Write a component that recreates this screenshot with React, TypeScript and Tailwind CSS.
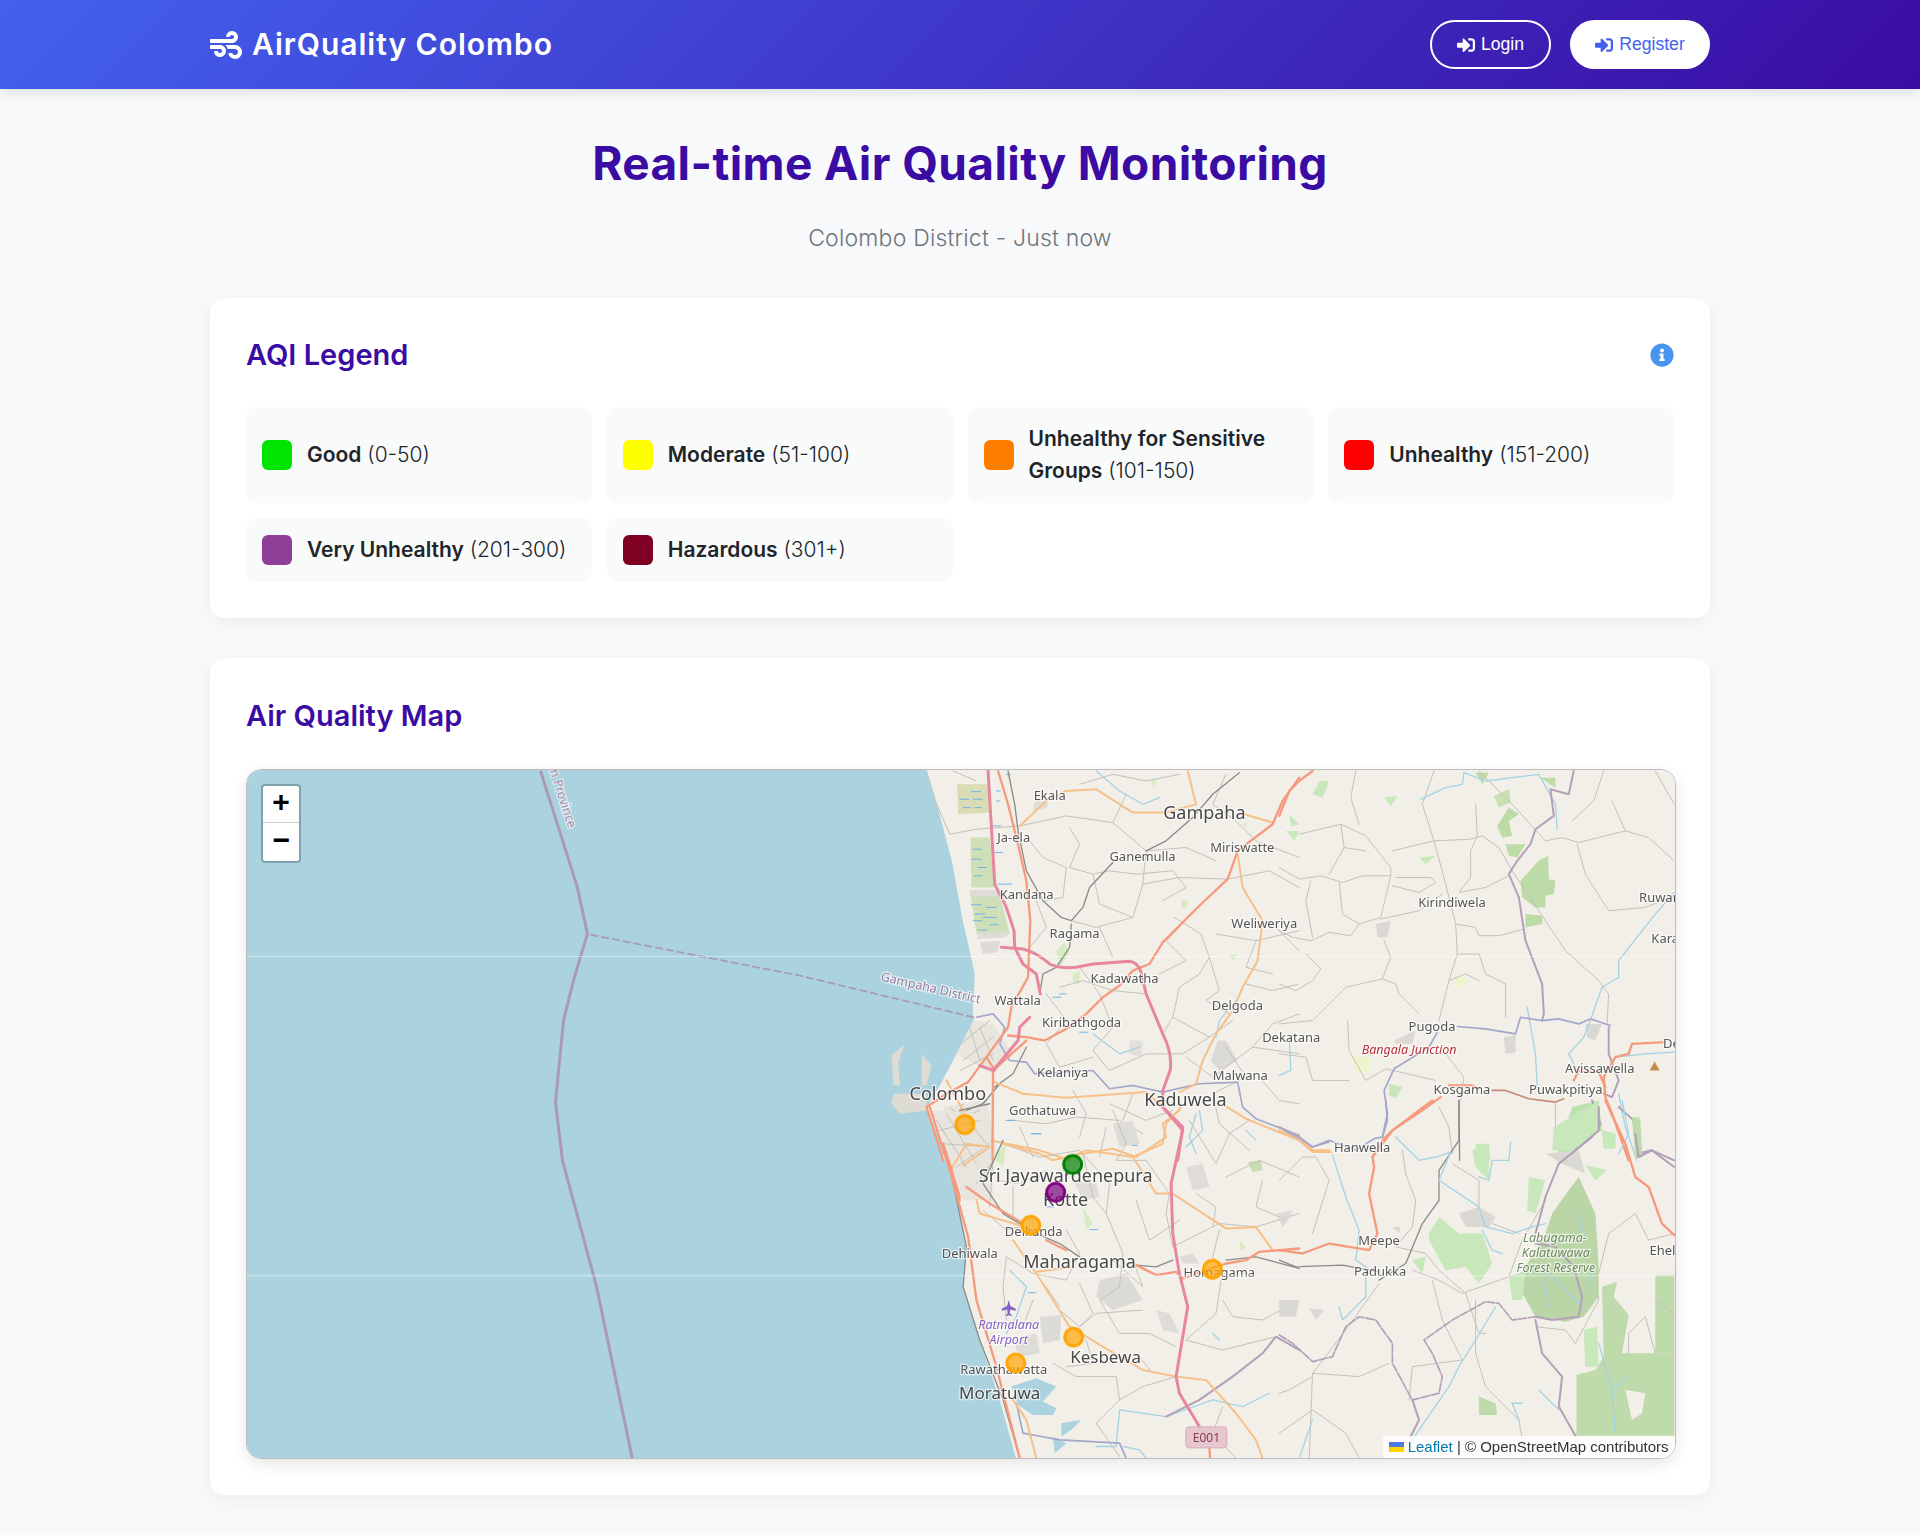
import { FaInfoCircle, FaSignInAlt, FaWind } from 'react-icons/fa';

const legend = [
  { name: 'Good', range: '(0-50)', color: 'bg-[#00e400]' },
  { name: 'Moderate', range: '(51-100)', color: 'bg-[#ffff00]' },
  { name: 'Unhealthy for Sensitive Groups', range: '(101-150)', color: 'bg-[#ff7e00]' },
  { name: 'Unhealthy', range: '(151-200)', color: 'bg-[#ff0000]' },
  { name: 'Very Unhealthy', range: '(201-300)', color: 'bg-[#8f3f97]' },
  { name: 'Hazardous', range: '(301+)', color: 'bg-[#7e0023]' },
];

type Style = { stroke: string; w: number; dash?: string };

const styles: Record<string, Style> = {
  grey: { stroke: '#c4c1ba', w: 3 },
  river: { stroke: '#a5d3e4', w: 4 },
  wet: { stroke: '#6fb4e8', w: 3 },
  rail: { stroke: '#8b8b88', w: 4 },
  kelani: { stroke: '#a3a6cb', w: 5 },
  border: { stroke: '#b39fb8', w: 6 },
  dashed: { stroke: '#b39fb8', w: 5, dash: '24 6' },
  second: { stroke: '#f6c088', w: 6 },
  trunk: { stroke: '#f69a7e', w: 7 },
  brown: { stroke: '#c48a76', w: 5 },
  motor: { stroke: '#e8869f', w: 9 },
};

// traced in the crop coordinates of each map panel (3 units = 1px)
const panels: {
  x: number;
  y: number;
  fills: [string, string][];
  lines: [keyof typeof styles, string][];
}[] = [
  {
    x: 880,
    y: 760,
    fills: [
      ['#d9dcb4', 'M232 70 L325 70 L330 155 L235 160Z'],
      ['#cfe0b8', 'M272 230 L330 230 L345 380 L275 380Z'],
      ['#cfe0b8', 'M272 400 L360 400 L390 520 L290 520Z'],
      ['#dedcd6', 'M270 388 L355 388 L360 408 L272 408Z'],
      ['#dedcd6', 'M290 515 L385 515 L380 530 L295 535Z'],
      ['#dcdbd7', 'M300 545 L360 540 L355 575 L310 580Z'],
      ['#e0ded9', 'M470 95 L500 95 L505 140 L460 150Z'],
      ['#dcdad6', 'M1015 840 L1040 840 L1075 900 L1020 930 L995 900Z'],
      ['#e2e0da', 'M750 840 L790 840 L785 890 L750 880Z'],
      ['#e8e5df', 'M280 780 L340 790 L400 880 L340 940 L230 880Z'],
      ['#e8e5df', 'M190 1040 L320 1020 L360 1200 L190 1200Z'],
      ['#d6ecc0', 'M530 570 L555 545 L570 575 L540 620Z'],
      ['#d6ecc0', 'M1050 585 L1075 580 L1060 600Z'],
      ['#d6ecc0', 'M905 420 L925 420 L920 445 L905 440Z'],
      ['#d6ecc0', 'M815 60 L830 50 L825 80Z M1090 190 L1105 185 L1100 200Z M580 640 L600 630 L600 670 L580 665Z'],
      ['#dedcd2', 'M40 1000 L140 1000 L140 1050 L60 1060 L35 1030Z'],
      ['#dedcd2', 'M35 885 L75 850 L55 905 L60 975 L40 975Z'],
      ['#dedcd2', 'M125 880 L155 915 L140 975 L125 975Z'],
    ],
    lines: [
      ['grey', 'M140 30 L170 130 L210 220 L290 205 L420 195 L560 165 L700 185 L800 270 L790 370 L760 470 L650 500 L575 480'],
      ['grey', 'M570 200 L600 250 L570 320 L640 340 L690 330 L770 340 L880 330 L920 380 L850 420'],
      ['grey', 'M450 240 L490 290 L560 320 L550 410 L490 420'],
      ['grey', 'M1040 40 L1000 130 L1070 180 L1130 240 L1260 290'],
      ['grey', 'M790 370 L900 350 L1045 355 L1170 330 L1260 380'],
      ['grey', 'M885 470 L965 520 L990 590 L960 640 L900 680 L880 770 L850 820'],
      ['grey', 'M1010 520 L1130 540 L1260 510'],
      ['grey', 'M990 590 L1020 690 L980 720 L1050 760'],
      ['grey', 'M1170 480 L1260 570'],
      ['grey', 'M1100 670 L1180 690 L1260 670'],
      ['grey', 'M600 620 L660 700 L700 800 L640 870 L690 930 L800 880 L910 880 L990 830'],
      ['grey', 'M880 770 L990 830 L1060 780'],
      ['grey', 'M500 700 L560 780 L500 850 L540 920 L640 890'],
      ['grey', 'M920 890 L1000 950 L1120 860 L1260 880'],
      ['grey', 'M1120 860 L1180 790 L1260 760'],
      ['grey', 'M580 990 L620 1060 L600 1130'],
      ['grey', 'M400 1080 L500 1090 L590 1070 L720 1080 L790 1120'],
      ['grey', 'M690 1030 L800 1080 L880 1050'],
      ['grey', 'M1000 1000 L1020 1090 L1110 1170'],
      ['grey', 'M230 860 L330 780 M250 900 L340 830 M240 930 L340 880 M270 800 L300 900 M300 800 L340 900'],
      ['grey', 'M160 1060 L260 1200 M210 1040 L330 1150 M250 1030 L190 1140 M170 1100 L300 1050 M200 1180 L330 1100'],
      ['grey', 'M220 30 L290 60 M600 70 L700 40 L800 60 L900 40 M700 185 L740 100 M800 270 L920 260 L1010 300'],
      ['grey', 'M470 420 L500 500 L450 560 M640 340 L660 430 L760 470 M660 500 L700 590 M540 680 L610 660 L700 690 L800 700'],
      ['grey', 'M900 500 L860 540 L920 600 L840 640 M1130 540 L1100 620 L1180 640 M1040 860 L1100 950 L1000 1000'],
      ['grey', 'M420 1100 L460 1190 M680 1100 L660 1190 M760 1000 L730 1080 M1140 950 L1200 1020 L1260 1030'],
      ['river', 'M640 820 L720 880 L780 860'],
      ['river', 'M650 30 L720 90 L790 130 L840 110'],
      ['river', 'M1070 720 L1020 780 L1010 830'],
      ['river', 'M950 1060 L930 1130 L950 1180'],
      ['wet', 'M275 92 h28 M240 115 h28 M280 115 h28 M250 140 h22 M285 140 h20 M350 90 h12 M350 120 h10 M380 40 h12'],
      ['wet', 'M280 265 h24 M275 295 h30 M295 320 h24 M282 345 h26 M340 195 h24 M345 275 h24 M355 370 h40'],
      ['wet', 'M275 432 h30 M320 440 h30 M285 460 h30 M310 470 h40 M280 480 h26 M330 492 h26 M295 508 h26'],
      ['wet', 'M520 710 h24 M540 700 h20 M380 1080 h24 M460 1120 h24 M600 815 h24'],
      ['rail', 'M385 30 L405 130 L415 210 L440 330 L490 420 L545 470 L575 480 L610 440 L630 380 L700 305'],
      ['rail', 'M1080 35 L1000 100 L940 170 L860 240 L800 270'],
      ['rail', 'M575 490 L570 560 L530 620 L490 640 L480 700'],
      ['rail', 'M345 980 L400 940 L440 860'],
      ['rail', 'M260 1050 L310 1030 L360 970'],
      ['kelani', 'M290 770 L340 760 L375 800 L360 850 L390 900 L440 905 L465 940 L640 930 L690 985 L760 975 L850 995 L960 970 L1075 965 L1090 1040 L1130 1075 L1260 1125'],
      ['second', 'M560 90 L500 120 L420 195'],
      ['second', 'M560 90 L650 85 L760 155 L860 155 L950 130 L925 30'],
      ['second', 'M1095 160 L1180 185'],
      ['second', 'M1075 280 L1090 380 L1150 480 L1135 600 L1090 680 L1060 750 L1010 820 L970 900 L950 970 L900 995'],
      ['second', 'M345 965 L430 1000 L560 1012 L800 995 L850 1040'],
      ['second', 'M905 1040 L860 1090 L850 1150 L760 1190 L620 1170 L560 1195'],
      ['second', 'M1035 1035 L1100 1075 L1260 1140'],
      ['second', 'M200 960 L255 1060 L330 1140 L480 1170 L570 1200'],
      ['second', 'M190 1130 L340 1140'],
      ['trunk', 'M355 30 L385 130 L415 250 L440 360 L452 480 L445 650 L395 740 L385 800 L320 890 L345 930'],
      ['trunk', 'M1260 50 L1210 120 L1180 190 L1075 270 L1045 355 L960 435 L850 545 L810 610 L760 630 L720 675 L670 710 L620 760 L560 805 L495 840 L440 830 L385 825'],
      ['trunk', 'M345 925 L440 840 M340 930 L338 1200 M320 890 L265 965 L200 1000 L140 1040 L190 1200'],
      ['motor', 'M325 30 L335 200 L345 370 L380 440 L403 510 L405 560 L430 610 L470 640 L482 700'],
      ['motor', 'M450 770 L420 800 L415 840 L340 930 L300 915'],
      ['motor', 'M365 560 L430 565 Q470 575 510 610 Q540 625 590 620 L640 610 L750 602 Q775 605 785 635 L800 700 L850 820 Q880 880 872 930 L850 990 L850 1040 L910 1100 L895 1200'],
    ],
  },
  {
    x: 880,
    y: 1100,
    fills: [
      ['#dedcd7', 'M700 70 L760 60 L780 130 L720 140Z'],
      ['#dedcd7', 'M920 200 L970 190 L990 260 L940 270Z'],
      ['#dcdad5', 'M660 540 L740 520 L790 600 L700 630 L650 590Z'],
      ['#dedcd7', 'M1190 340 L1240 330 L1210 380Z'],
      ['#dedcd7', 'M580 240 L650 250 L660 290 L610 300Z'],
      ['#dcdad5', 'M480 650 L545 645 L540 720 L490 730Z'],
      ['#dedcd7', 'M400 720 L470 700 L480 760 L420 770Z'],
      ['#dedcd7', 'M830 630 L870 640 L900 700 L850 690Z'],
      ['#dedcd7', 'M900 470 L940 460 L960 490 L910 490Z'],
      ['#e8e5df', 'M160 30 L330 40 L340 300 L250 300Z'],
      ['#c8dcb2', 'M1105 185 L1145 180 L1150 210 L1120 215Z'],
      ['#d6ecc0', 'M340 170 L380 130 L370 200Z M610 320 L640 370 L620 390Z M1080 420 L1100 440 L1085 450Z'],
      ['#aad3df', 'M395 860 L470 835 L530 860 L490 905 L530 925 L520 945 L460 945 L415 915Z'],
      ['#aad3df', 'M545 970 L605 960 L575 990 L545 1010Z M520 1010 L560 1030 L525 1060Z'],
    ],
    lines: [
      ['grey', 'M370 130 L480 170 L600 150 L690 250 L680 340 L730 460 L720 560 L660 600 L720 700 L810 700 L890 740'],
      ['grey', 'M700 30 L740 130 L710 180 L800 180 L870 280 L860 340 L880 440'],
      ['grey', 'M930 60 L1010 190 L1050 100 L1110 60'],
      ['grey', 'M1040 230 L1140 180 L1260 230'],
      ['grey', 'M1020 390 L1000 470 L1030 510 L1010 640 L920 720'],
      ['grey', 'M880 440 L1020 370 L1130 380 L1260 340'],
      ['grey', 'M1030 600 L1060 650 L1150 660 L1260 600'],
      ['grey', 'M920 720 L1030 750 L1190 710 L1260 750'],
      ['grey', 'M540 630 L600 680 L650 640 L790 630'],
      ['grey', 'M600 550 L640 640 L600 680'],
      ['grey', 'M520 790 L590 830 L710 830 L720 900 L650 970 L720 1070'],
      ['grey', 'M720 900 L790 860 L890 830'],
      ['grey', 'M1030 920 L1000 1000 L1070 1075'],
      ['grey', 'M560 390 L600 460 L560 540 L460 520 L380 470 L370 560 L380 660'],
      ['grey', 'M310 330 L380 390 L420 380 M350 240 L420 250 L500 210'],
      ['grey', 'M400 260 L400 360 M290 250 L340 180 L330 320'],
      ['grey', 'M610 160 L640 290 L680 340'],
      ['grey', 'M170 60 L260 200 M190 130 L330 140 M230 200 L330 130 M200 40 L290 190 M240 30 L320 130 M180 90 L300 60'],
      ['grey', 'M770 300 L810 420 L900 360 M760 480 L790 560 L700 480 M950 280 L1010 320 L1000 380 M1150 240 L1130 320 L1200 350'],
      ['grey', 'M500 560 L540 620 M460 600 L430 680 M620 720 L640 790 L560 800 M770 760 L820 820'],
      ['river', 'M390 510 L440 560 L410 650 L380 700'],
      ['river', 'M960 30 L970 90 L920 140 M1100 90 L1130 120'],
      ['river', 'M1170 880 L1090 920 L1000 900 L860 950 L720 930 L710 1040 L650 1040'],
      ['river', 'M730 1040 L780 1050 L800 1075 M1000 700 L1020 720'],
      ['wet', 'M380 60 h22 M455 100 h28 M500 320 h24 M630 388 h24 M445 578 h24 M760 135 h14 M470 40 h20'],
      ['rail', 'M240 30 L330 10 M370 120 L310 250 L370 340 L470 400 L540 430 L600 470'],
      ['rail', 'M770 495 L830 500 L880 480 M1040 480 L1130 470 L1260 505'],
      ['rail', 'M210 200 L260 440 L250 560 L300 720 L370 900 L420 1075'],
      ['border', 'M1260 750 L1190 710 L1150 760 L1060 830 L960 900 L860 950'],
      ['kelani', 'M410 910 L430 1000 L540 1020 L720 1030 L740 1075'],
      ['second', 'M370 130 L480 160 L520 180 L610 160 L700 145 L770 170 L860 110 L850 70 L900 30'],
      ['second', 'M760 170 L830 280 L880 280 L1040 385 L1130 380 L1180 450'],
      ['second', 'M290 300 L300 340 L420 375'],
      ['second', 'M400 420 L470 520 L570 680 L670 740 L790 810 L890 830 L980 840 L1070 940 L1130 1020 L1150 1075'],
      ['second', 'M470 515 L580 500 M400 900 L440 960 L470 1075'],
      ['second', 'M215 205 L260 130 L330 140 L250 195'],
      ['trunk', 'M150 20 L210 210 L265 410 L290 600 L350 800 L420 1075'],
      ['trunk', 'M260 260 L330 310 L430 370'],
      ['trunk', 'M500 420 L560 450 M770 495 L830 525 L890 515 L910 535 L1040 490 L1100 480 L1140 455 L1260 445'],
      ['trunk', 'M210 190 L240 300 M190 130 L240 290'],
      ['motor', 'M850 20 L910 90 L875 250 L880 400 L900 520 L925 620 L890 830 L900 880 L960 980'],
      ['trunk', 'M990 1040 L992 1075'],
    ],
  },
  {
    x: 1280,
    y: 760,
    fills: [
      ['#bcdba6', 'M780 300 L808 285 L810 355 L830 360 L825 400 L800 405 L800 440 L770 440 L730 410 L725 360Z'],
      ['#bcdba6', 'M740 460 L790 465 L790 490 L740 500Z'],
      ['#bcdba6', 'M690 140 L720 160 L690 180 L700 225 L670 230 L655 195Z'],
      ['#bcdba6', 'M680 250 L740 250 L715 290 L690 285Z'],
      ['#bcdba6', 'M785 50 L830 50 L830 80Z M590 35 L630 35 L610 70Z'],
      ['#c8e0b2', 'M645 105 L690 85 L695 125 L660 140Z'],
      ['#bbe2ae', 'M830 1200 L880 1040 L960 1020 L970 1110 L900 1150 L880 1200Z'],
      ['#c8e8bc', 'M590 1150 L630 1150 L635 1200 L590 1200Z'],
      ['#c8e8bc', 'M330 970 L370 980 L350 1015 L330 1005Z M420 290 L470 285 L440 310Z M315 110 L355 105 L335 135Z'],
      ['#c8e8bc', 'M120 60 L150 60 L130 110 L100 100Z M30 160 L60 190 L35 195Z M20 210 L60 210 L45 240Z'],
      ['#dad8d3', 'M290 490 L335 480 L325 530 L295 530Z M345 840 L410 810 L400 850 L350 850Z'],
      ['#dad8d3', 'M675 830 L710 825 L710 875 L680 880Z M920 790 L970 790 L950 840 L925 830Z'],
      ['#c8e8bc', 'M1060 1070 L1085 1070 L1090 1170 L1070 1170Z M970 1110 L1010 1120 L1010 1165 L975 1160Z'],
      ['#eef4cc', 'M210 890 L280 890 L270 940 L230 930Z M530 640 L570 660 L530 690Z'],
    ],
    lines: [
      ['grey', 'M230 30 L215 110 L240 190'],
      ['grey', 'M60 220 L185 190 L260 225 L335 320 L335 345 L250 345 L190 365 L125 345 L60 355 L0 320'],
      ['grey', 'M185 190 L195 260 L150 340 M195 260 L260 270'],
      ['grey', 'M340 270 L465 240 L575 235 L610 225 L660 260 L700 330 L800 480 L860 570 L960 660 L990 700 L985 790'],
      ['grey', 'M465 30 L430 130 L465 240 L495 350 L530 490 L535 580 L510 660 L480 780'],
      ['grey', 'M590 130 L595 225 L575 270 L575 350 L540 395 L620 380 L690 345'],
      ['grey', 'M530 490 L590 500 L600 525 L660 525 L735 505'],
      ['grey', 'M340 375 L420 395 L470 365 L455 350 L350 350'],
      ['grey', 'M335 345 L305 470 L240 490 L215 525 L150 515 L95 540 L40 530 L0 510'],
      ['grey', 'M305 475 L420 450 L490 400 M180 365 L190 460 L240 490 M95 360 L80 420 L100 530'],
      ['grey', 'M80 580 L125 625 L100 660 L50 690 L0 670'],
      ['grey', 'M315 540 L335 590 L310 655 L200 680 L100 780 L0 790 M310 655 L350 670 L360 700 L420 760'],
      ['grey', 'M535 580 L600 580 L620 640 L680 670 L680 770 M600 660 L560 640 L510 660'],
      ['grey', 'M205 780 L210 870 L260 960 L320 925 L470 960 M0 880 L80 890 L100 960 L210 960'],
      ['grey', 'M880 180 L945 120 L975 30 M800 240 L850 230 L900 245 L1040 210 L1110 230 L1187 300'],
      ['grey', 'M895 250 L920 340 L990 450 L1100 440 L1187 405 M1040 210 L1000 120 M1130 30 L1187 130'],
      ['grey', 'M545 1020 L555 950 L500 880 M830 1030 L830 1100 M480 1040 L510 1100 L520 1180'],
      ['grey', 'M600 30 L700 130 L800 240'],
      ['rail', 'M540 1020 L542 1200'],
      ['river', 'M425 115 L500 80 L550 70 L555 35 L620 60 L780 40 L830 130 L835 205'],
      ['river', 'M1187 395 L1130 460 L1075 530 L1020 600 L1020 650 L970 680 L935 780 L915 830 L870 880 L900 940'],
      ['river', 'M745 740 L770 880 L775 980 M30 830 L35 930 L0 945 M1020 1000 L1040 1100 L1075 1200 M1010 890 L1100 880 L1187 875'],
      ['border', 'M885 30 L870 100 L815 85 L825 165 L770 205 L755 250 L715 300 L690 340 L720 410 L740 540 L790 670 L795 760 L790 780'],
      ['border', 'M990 800 L990 880 L1020 960 L1000 1010 L975 1000 M940 1020 L965 1090 L940 1130 L890 1170 L860 1200'],
      ['border', 'M1020 1040 L1065 1080 L1075 1180 L1120 1170 L1187 1200'],
      ['kelani', 'M535 798 L620 805 L710 820 L725 770 L790 780 L840 775 L900 790 L935 775 L995 795'],
      ['kelani', 'M475 815 L450 860 L345 925 L315 990 L325 1060 L310 1130 L285 1135 L230 1170 L150 1140 L100 1160 L30 1120 L0 1100'],
      ['brown', 'M640 990 L680 990 L750 1015 L830 1025 L855 1015'],
      ['second', 'M0 1100 L60 1130 L100 1170 L150 1170'],
      ['trunk', 'M485 1010 L430 1050 L340 1110 L280 1190'],
      ['trunk', 'M1160 845 L1060 850 L1050 880 L1010 890 L975 950 L980 1010 L1000 1060 L1050 1200'],
      ['trunk', 'M885 960 L900 930 L960 935 L980 980 M510 975 L580 975 L600 985 M0 165 L30 90 L60 60 L100 30'],
    ],
  },
  {
    x: 1280,
    y: 1100,
    fills: [
      ['#bbd6a6', 'M900 230 L950 340 L960 500 L960 590 L915 650 L860 665 L770 650 L725 570 L740 500 L800 400 L820 340 L870 270Z'],
      ['#bfdaab', 'M1130 525 L1187 525 L1187 760 L1130 760Z'],
      ['#bfdaab', 'M970 560 L1015 545 L1005 590 L1050 645 L1030 760 L1130 760 L1187 760 L1187 1008 L893 1008 L893 825 L950 810 L975 770Z'],
      ['#c8e8bc', 'M450 400 L480 350 L540 400 L610 400 L640 490 L600 550 L560 500 L500 510 L450 420Z'],
      ['#c8e8bc', 'M580 150 L630 130 L630 240 L590 200Z M750 230 L800 240 L770 340 L745 330Z'],
      ['#c8e8bc', 'M915 690 L955 680 L960 800 L920 800Z M825 80 L960 0 L960 90 L880 150 L820 150Z M400 480 L440 470 L430 520Z'],
      ['#c8e8bc', 'M690 530 L740 510 L730 600 L700 600Z M970 90 L1010 100 L1010 145 L975 145Z M920 195 L985 210 L950 240Z'],
      ['#bfdaab', 'M600 890 L650 910 L655 945 L600 945Z M1060 50 L1085 60 L1090 170 L1070 175Z'],
      ['#dad8d3', 'M540 340 L600 320 L650 350 L630 380 L560 380Z M90 625 L135 630 L110 660Z M0 600 L60 600 L50 650 L0 650Z'],
      ['#dad8d3', 'M800 160 L900 150 L920 220 L850 190Z M340 380 L365 380 L360 400Z M0 350 L40 340 L10 380Z'],
      ['#f3f0e9', 'M1040 870 L1100 880 L1090 940 L1060 960Z'],
    ],
    lines: [
      ['grey', 'M0 240 L70 170 L110 170 L150 240 L100 400'],
      ['grey', 'M370 150 L380 220 L410 300 L400 380 L350 440 L440 460 L480 510 L560 580 L600 700 L620 700'],
      ['grey', 'M300 550 L200 690 L100 820 L240 830 L330 790 M100 820 L90 1075'],
      ['grey', 'M400 510 L480 540 L550 580 L690 530 L730 420 L800 300'],
      ['grey', 'M460 540 L490 660 L550 780 L400 800 L390 900'],
      ['grey', 'M590 600 L590 760 L620 860 L720 960 L740 1075'],
      ['grey', 'M770 680 L860 690 L890 730 L960 600 L950 520'],
      ['grey', 'M1187 400 L1110 420 L1070 340 L990 400 L960 520'],
      ['grey', 'M0 1000 L100 930 L200 1000 L240 1075 M100 830 L30 870 L0 880'],
      ['grey', 'M520 190 L600 240 L600 320 M640 370 L720 400'],
      ['grey', 'M1130 760 L1100 650 L1050 700 L1050 760 M1187 640 L1130 600'],
      ['rail', 'M540 0 L540 120 L480 210 L480 300 L430 370 L380 490 L300 540'],
      ['rail', 'M0 480 L50 500 L190 495 L300 515'],
      ['river', 'M350 110 L420 180 L470 170 L515 155 L480 240 L600 320 L620 380 L700 400 L760 380 L800 370'],
      ['river', 'M160 165 L200 290 L240 390 L230 480 L260 500 L260 590 L190 660 L180 620'],
      ['river', 'M600 230 L630 240 L640 180 L690 180 L695 125 M610 390 L640 450 L670 460'],
      ['river', 'M650 620 L590 720 L540 800 L510 860 L420 990 L400 1020 M100 960 L60 1075'],
      ['river', 'M960 730 L1000 870 L1010 1000 M1050 830 L1000 870 M780 870 L840 930 M720 960 L700 910 L730 910'],
      ['river', 'M900 340 L920 420 M910 620 L790 500 L810 620 M940 500 L930 560 M1030 0 L1050 100 L1020 160'],
      ['border', 'M770 650 L820 660 L900 650 L910 590 L885 500 L830 440 L770 430'],
      ['border', 'M770 660 L790 760 L850 830 L840 920 L890 1008'],
      ['border', 'M770 400 L800 290 L840 190 L890 150 L960 90 L960 20'],
      ['border', 'M1070 100 L1080 170 L1120 150 L1187 200'],
      ['dashed', 'M0 705 L40 730 L100 785 L160 770 L200 680 L240 650 L290 660 L340 730 L340 790 L400 900 L480 880 L490 830 L460 760 L435 720 L520 660 L620 605 L660 610 L700 660 L770 650'],
      ['border', 'M400 900 L420 960 L395 1010'],
      ['kelani', 'M320 0 L325 60 L310 110 M0 80 L60 110 L100 140 L150 125'],
      ['second', 'M0 90 L60 120 L100 155 L155 155'],
      ['trunk', 'M460 0 L340 90 L310 120 L280 170 L285 200 L270 280 L295 400 L270 450 L150 430 L70 460 L0 450'],
      ['trunk', 'M980 0 L1040 130 L1070 230 L1110 260 L1150 370 L1187 405'],
    ],
  },
];

const cities: [string, number, number, number][] = [
  ['Gampaha', 1205, 811, 18],
  ['Colombo', 948, 1093, 18],
  ['Kaduwela', 1186, 1099, 18],
  ['Sri Jayawardenepura', 1066, 1175, 18],
  ['Kotte', 1066, 1199, 18],
  ['Maharagama', 1080, 1261, 18],
  ['Kesbewa', 1106, 1356, 17],
  ['Moratuwa', 1000, 1393, 17],
];

const towns: [string, number, number][] = [
  ['Ekala', 1050, 794],
  ['Ja-ela', 1014, 836],
  ['Ganemulla', 1143, 855],
  ['Miriswatte', 1243, 846],
  ['Kandana', 1027, 893],
  ['Weliweriya', 1265, 922],
  ['Ragama', 1075, 932],
  ['Kadawatha', 1125, 977],
  ['Wattala', 1018, 999],
  ['Delgoda', 1238, 1004],
  ['Kiribathgoda', 1082, 1021],
  ['Dekatana', 1292, 1036],
  ['Malwana', 1241, 1075],
  ['Kelaniya', 1063, 1072],
  ['Gothatuwa', 1043, 1110],
  ['Delkanda', 1034, 1231],
  ['Dehiwala', 970, 1253],
  ['Homagama', 1220, 1272],
  ['Rawathawatta', 1004, 1369],
  ['Kirindiwela', 1453, 901],
  ['Pugoda', 1433, 1025],
  ['Avissawella', 1601, 1068],
  ['Kosgama', 1463, 1089],
  ['Puwakpitiya', 1567, 1089],
  ['Hanwella', 1363, 1147],
  ['Meepe', 1380, 1240],
  ['Padukka', 1381, 1271],
  ['Ruwanwella', 1677, 896],
  ['Karawanella', 1690, 937],
  ['Dehiowita', 1695, 1042],
  ['Eheliyagoda', 1688, 1250],
];

const markers: [number, number, string][] = [
  [965, 1124, '#ffa500'],
  [1073, 1164, '#008000'],
  [1056, 1192, '#800080'],
  [1031, 1225, '#ffa500'],
  [1213, 1269, '#ffa500'],
  [1074, 1337, '#ffa500'],
  [1016, 1363, '#ffa500'],
];

function MapDrawing() {
  return (
    <svg viewBox="246 769 1430 690" preserveAspectRatio="xMinYMin slice" className="block h-full w-full">
      <defs>
        <filter id="tile" x="0" y="0" width="100%" height="100%">
          <feGaussianBlur stdDeviation="0.5" />
        </filter>
      </defs>
      <rect x="246" y="769" width="1430" height="690" fill="#aad3df" />
      <g filter="url(#tile)">
        <path
          d="M925 765 L937 803 L952 860 L963 920 L975 973 L973 1013 L975 1027 L957 1053 L940 1085 L927 1107 L940 1140 L957 1197 L967 1250 L963 1287 L980 1340 L1000 1400 L1018 1465 L1680 1465 L1680 765Z"
          fill="#f2efe9"
        />
        {panels.map((p) => (
          <g key={`${p.x}-${p.y}`} transform={`translate(${p.x} ${p.y}) scale(0.3333)`}>
            {p.fills.map(([fill, d]) => (
              <path key={d} d={d} fill={fill} />
            ))}
            {p.lines.map(([kind, d]) => (
              <path
                key={d}
                d={d}
                fill="none"
                stroke={styles[kind].stroke}
                strokeWidth={styles[kind].w}
                strokeDasharray={styles[kind].dash}
                strokeLinejoin="round"
                strokeLinecap="round"
              />
            ))}
          </g>
        ))}
        <path
          d="M540 770 L560 833 L577 887 L587 933 L573 980 L563 1020 L555 1102 L562 1160 L596 1286 L632 1459"
          fill="none"
          stroke="#ab9ab5"
          strokeWidth="3"
          strokeLinejoin="round"
        />
        <path d="M590 934 L800 975 L975 1017" fill="none" stroke="#ab9ab5" strokeWidth="1.8" strokeDasharray="8 3" />
        <g fontFamily="'Noto Sans', sans-serif" textAnchor="middle" dominantBaseline="central" paintOrder="stroke" stroke="#ffffff" strokeOpacity="0.65" strokeWidth="2.5">
          {cities.map(([t, x, y, s]) => (
            <text key={t} x={x} y={y} fontSize={s} fill="#484848">{t}</text>
          ))}
          {towns.map(([t, x, y]) => (
            <text key={t} x={x} y={y} fontSize="13" fill="#555555">{t}</text>
          ))}
          <g fontStyle="italic" fontSize="12.5" fill="#8461c4">
            <text x="1009" y="1324">Ratmalana</text>
            <text x="1009" y="1339">Airport</text>
          </g>
          <text x="1410" y="1049" fontStyle="italic" fontSize="12.5" fill="#b5313d">Bangala Junction</text>
          <g fontStyle="italic" fontSize="12.5" fill="#6f8a62">
            <text x="1556" y="1237">Labugama-</text>
            <text x="1557" y="1252">Kalatuwawa</text>
            <text x="1557" y="1267">Forest Reserve</text>
          </g>
          <g fontSize="12.5" fill="#9a7d9f">
            <text x="0" y="0" transform="translate(931 987) rotate(13)">Gampaha District</text>
            <text x="0" y="0" transform="translate(556 778) rotate(72)">Western Province</text>
          </g>
        </g>
        <path d="M1004 1300 l1.6 6 l5.4 2.6 l0 2 l-5.4 -1.2 l-.6 4 l2 1.4 l0 1.2 l-3 -.8 l-3 .8 l0 -1.2 l2 -1.4 l-.6 -4 l-5.4 1.2 l0 -2 l5.4 -2.6Z" fill="#8461c4" transform="translate(5 0)" />
        <path d="M1656 1061 l5 9 l-10 0Z" fill="#c98a4b" />
        <rect x="1186.5" y="1427" width="41" height="21" rx="3" fill="#e8c6d0" stroke="#d9a9b8" />
        <text x="1207" y="1438" textAnchor="middle" dominantBaseline="central" fontFamily="'Noto Sans', sans-serif" fontSize="12" fill="#8a3a50">E001</text>
      </g>
      <path d="M246 955.5 H1676" stroke="#ffffff" strokeOpacity="0.6" />
      <path d="M246 1275.5 H1676" stroke="#ffffff" strokeOpacity="0.6" />
      {markers.map(([x, y, c]) => (
        <circle key={`${x}-${y}`} cx={x} cy={y} r="9" fill={c} fillOpacity="0.7" stroke={c} strokeWidth="3" />
      ))}
    </svg>
  );
}

function SectionTitle({ children }: { children: string }) {
  return <h2 className="text-[29px] leading-[46px] font-semibold text-[#3a0ca3]">{children}</h2>;
}

export default function App() {
  return (
    <div className="min-h-[1535px] bg-[#f8f9fa] font-[family-name:Inter,sans-serif] text-[#212529]">
      {/* Top bar */}
      <header className="h-[89px] bg-[linear-gradient(135deg,#4361ee,#3a0ca3)] shadow-[0_4px_12px_rgba(0,0,0,0.1)]">
        <div className="mx-auto flex h-full w-[1500px] items-center justify-between">
          <div className="flex items-center gap-[10px] text-white">
            <FaWind size={32} />
            <span className="text-[30px] font-semibold tracking-[1px]">AirQuality Colombo</span>
          </div>
          <div className="flex items-center gap-[19px] font-[family-name:'Liberation_Sans',Arial,sans-serif] text-[17.6px]">
            <button className="flex h-[49px] w-[121px] items-center justify-center gap-[6px] rounded-[25px] border-2 border-white text-white">
              <FaSignInAlt size={18} />
              Login
            </button>
            <button className="flex h-[49px] w-[140px] items-center justify-center gap-[6px] rounded-[25px] bg-white text-[#4361ee]">
              <FaSignInAlt size={18} />
              Register
            </button>
          </div>
        </div>
      </header>

      <main className="mx-auto w-[1500px] pt-[38px] pb-[40px]">
        <h1 className="text-center text-[46px] leading-[72px] font-bold tracking-[0.4px] text-[#3a0ca3]">
          Real-time Air Quality Monitoring
        </h1>
        <p className="mt-[22px] text-center text-[23px] leading-[35px] font-light tracking-[0.2px] text-[#6c757d]">Colombo District - Just now</p>

        {/* Legend */}
        <section className="mt-[42px] rounded-[15px] bg-white px-[36px] pt-[34px] pb-[36px] shadow-[0_5px_20px_rgba(0,0,0,0.05)]">
          <div className="mb-[29.2px] flex items-center justify-between">
            <SectionTitle>AQI Legend</SectionTitle>
            <FaInfoCircle size={24} className="text-[#4895ef]" />
          </div>
          <div className="grid grid-cols-4 gap-[15px]">
            {legend.map((item) => (
              <div key={item.name} className="flex items-center gap-[15px] rounded-[10px] bg-[#f9fafa] p-[16px]">
                <div className={`h-[30px] w-[30px] shrink-0 rounded-[6px] ${item.color}`} />
                <div className="text-[21px] leading-[32px] font-light">
                  <strong className="font-semibold">{item.name}</strong> {item.range}
                </div>
              </div>
            ))}
          </div>
        </section>

        {/* Map */}
        <section className="mt-[40px] rounded-[15px] bg-white pt-[35px] pr-[34.4px] pb-[36px] pl-[36px] shadow-[0_5px_20px_rgba(0,0,0,0.05)]">
          <div className="mb-[29.8px]">
            <SectionTitle>Air Quality Map</SectionTitle>
          </div>
          <div className="relative h-[690px] overflow-hidden rounded-[15px] border border-[#bdbdbd] shadow-[0_5px_15px_rgba(0,0,0,0.1)]">
            <MapDrawing />
            <div className="absolute top-[14px] left-[14px] w-[40px] overflow-hidden rounded-[4px] border-2 border-[#7fa3ae] bg-white font-[family-name:'Liberation_Mono',monospace] text-[30px] font-bold text-black">
              <div className="flex h-[37.5px] items-center justify-center border-b border-[#cccccc]">+</div>
              <div className="flex h-[37.5px] items-center justify-center">−</div>
            </div>
            <div className="absolute right-0 bottom-0 flex h-[22px] items-center gap-[4px] bg-white/80 px-[6px] font-[family-name:'Liberation_Sans',Arial,sans-serif] text-[15px] text-[#333333]">
              <svg width="15" height="10" viewBox="0 0 15 10" className="shrink-0">
                <rect width="15" height="5" fill="#4c7be1" />
                <rect y="5" width="15" height="5" fill="#ffd500" />
              </svg>
              <span>
                <span className="text-[#0078a8]">Leaflet</span> | © OpenStreetMap contributors
              </span>
            </div>
          </div>
        </section>
      </main>
    </div>
  );
}
